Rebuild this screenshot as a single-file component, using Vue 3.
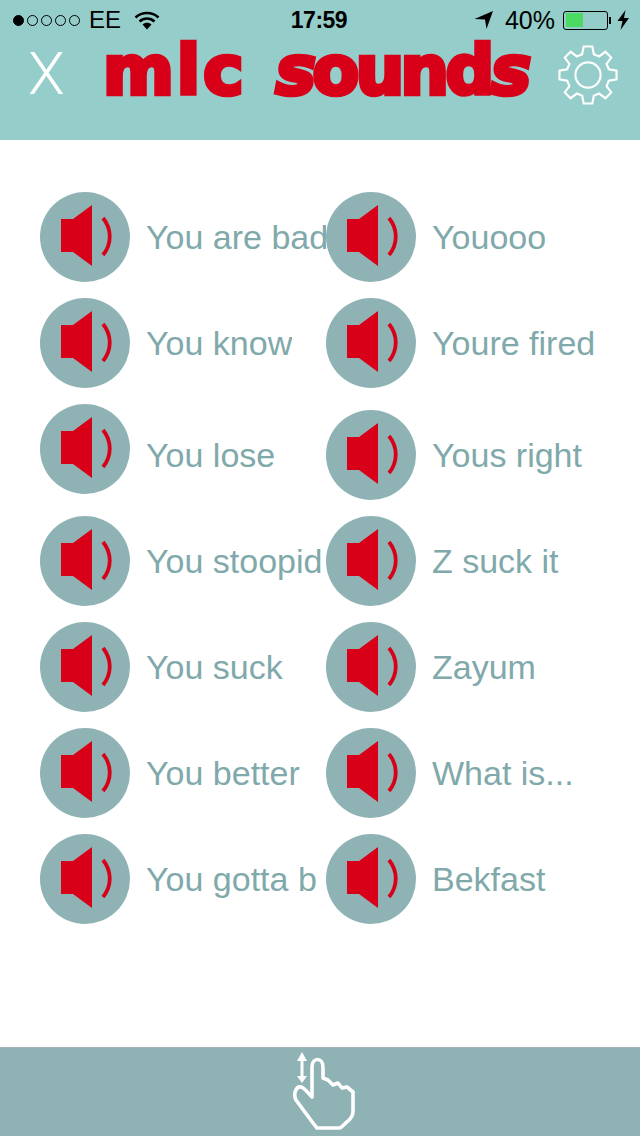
<script setup>
const left = [
  { label: 'You are bad' },
  { label: 'You know' },
  { label: 'You lose', low: true },
  { label: 'You stoopid', wide: true },
  { label: 'You suck' },
  { label: 'You better' },
  { label: 'You gotta b' }
]
const right = [
  { label: 'Youooo' },
  { label: 'Youre fired' },
  { label: 'Yous right', wide: true },
  { label: 'Z suck it' },
  { label: 'Zayum' },
  { label: 'What is...' },
  { label: 'Bekfast' }
]
const columns = [left, right]
</script>

<template>
  <div class="page">
    <header class="header">
      <div class="status">
        <div class="status-left">
          <span class="dots">
            <i class="dot full"></i><i class="dot"></i><i class="dot"></i><i class="dot"></i><i class="dot"></i>
          </span>
          <span class="carrier">EE</span>
          <svg class="wifi" width="26" height="20" viewBox="0 0 26 20">
            <path d="M1.5 7.5 C8 1.5 18 1.5 24.5 7.5" fill="none" stroke="#000" stroke-width="2.6"/>
            <path d="M5.5 11.5 C10 7.5 16 7.5 20.5 11.5" fill="none" stroke="#000" stroke-width="2.6"/>
            <path d="M8.5 14.6 L13 19.5 L17.5 14.6 C15 12.2 11 12.2 8.5 14.6 Z" fill="#000"/>
          </svg>
        </div>
        <div class="time">17:59</div>
        <div class="status-right">
          <svg class="arrow" width="20" height="20" viewBox="0 0 20 20">
            <path d="M0.5 9 L19 1 L12.5 19 L11 9.5 Z" fill="#000"/>
          </svg>
          <span class="pct">40%</span>
          <span class="battery"><span class="charge"></span></span>
          <span class="nub"></span>
          <svg class="bolt" width="13" height="20" viewBox="0 0 13 20">
            <path d="M8.5 0 L0.5 11 L5.5 11 L3.5 20 L12 8 L7 8 Z" fill="#000"/>
          </svg>
        </div>
      </div>
      <div class="nav">
        <span class="close">X</span>
        <span class="logo"><span class="logo-first">mlc</span><span class="logo-second"><em>s</em>ound<em>s</em></span></span>
        <svg class="gear" width="60" height="60" viewBox="-31 -31 62 62">
          <path d="M-4.500 -29.500 H4.500 L6 -21.500 L11.500 -19.200 L18 -24 L24 -18 L19.200 -11.500 L21.500 -6 L29.500 -4.500 V4.500 L21.500 6 L19.200 11.500 L24 18 L18 24 L11.500 19.200 L6 21.500 L4.500 29.500 H-4.500 L-6 21.500 L-11.500 19.200 L-18 24 L-24 18 L-19.200 11.500 L-21.500 6 L-29.500 4.500 V-4.500 L-21.500 -6 L-19.200 -11.500 L-24 -18 L-18 -24 L-11.500 -19.200 L-6 -21.500 Z" fill="none" stroke="#fff" stroke-width="2.200"/>
          <circle r="13" fill="none" stroke="#fff" stroke-width="2.200"/>
        </svg>
      </div>
    </header>

    <main class="board">
      <div v-for="(col, c) in columns" :key="c" class="column">
        <div v-for="item in col" :key="item.label" class="row" :class="{ wide: item.wide, low: item.low }">
          <span class="sound">
            <svg width="90" height="90" viewBox="0 0 90 90">
              <circle cx="45" cy="45" r="45" fill="#8fb3b4"/>
              <path d="M21 27 H33 L52 13 V74 L33 60 H21 Z" fill="#d80018"/>
              <path d="M63 26 C72 37 72 52 63 63" fill="none" stroke="#d80018" stroke-width="3.800"/>
            </svg>
          </span>
          <span class="label">{{ item.label }}</span>
        </div>
      </div>
    </main>

    <footer class="footer">
      <svg class="hand" width="66" height="86" viewBox="0 0 66 86">
        <path d="M5 11 L10 2 L15 11 Z M5 26 H15 L10 33 Z" fill="#fff"/>
        <path d="M10 10 V27" stroke="#fff" stroke-width="3"/>
        <path d="M20 47 V17 C20 7 31 7 31 17 V28 L36 30 L41 35 L46 33 L50 38 L55 37 L61 42 V62 C61 68 55 72 48 78 H25 C20 72 10 58 4 50 C1 44 4 36 9 37 C13 38 16 43 20 47 Z" fill="none" stroke="#fff" stroke-width="3.600" stroke-linejoin="round"/>
      </svg>
    </footer>
  </div>
</template>

<style scoped>
.page {
  width: 640px;
  height: 1136px;
  display: flex;
  flex-direction: column;
  background: #fff;
  overflow: hidden;
  font-family: "Liberation Sans", Arial, sans-serif;
}
.header {
  height: 140px;
  background: #94cdc9;
  flex: none;
}
.status {
  height: 40px;
  display: grid;
  grid-template-columns: 1fr auto 1fr;
  align-items: center;
  padding: 0 10px 0 13px;
  color: #000;
  font-size: 24px;
}
.status-left, .status-right {
  display: flex;
  align-items: center;
}
.status-right { justify-content: flex-end; }
.dots { display: flex; gap: 3px; margin-right: 9px; }
.dot {
  width: 11px;
  height: 11px;
  border: 1.3px solid #000;
  border-radius: 50%;
  box-sizing: border-box;
}
.dot.full { background: #000; }
.carrier { margin-right: 13px; }
.time { font-weight: 700; font-size: 23px; letter-spacing: -.5px; margin-right: 5px; }
.arrow { margin-right: 11px; }
.pct { margin-right: 8px; font-size: 25px; }
.battery {
  width: 45px;
  height: 19px;
  border: 1.3px solid #000;
  border-radius: 3px;
  box-sizing: border-box;
  padding: 1.5px;
  display: flex;
}
.charge { width: 17px; background: #4cd964; }
.nub {
  width: 2px;
  height: 7px;
  background: #000;
  margin: 0 6px 0 1px;
}
.nav {
  height: 70px;
  display: flex;
  align-items: center;
  padding-left: 28px;
}
.close {
  width: 75px;
  flex: none;
  color: #fff;
  font-family: Roboto, "Liberation Sans", sans-serif;
  font-size: 60px;
  font-weight: 300;
  line-height: 1;
  margin-top: -3px;
}
.logo {
  flex: none;
  width: 427px;
  display: flex;
  gap: 29px;
  font-family: "DejaVu Sans", sans-serif;
  font-weight: 700;
  font-size: 68px;
  line-height: 66px;
  margin-top: -8px;
  color: #d80018;
  -webkit-text-stroke: 4.5px #d80018;
  white-space: nowrap;
}
.logo-first { letter-spacing: 3px; }
.logo-second { letter-spacing: -3.5px; }
.logo em { font-style: oblique; }
.gear { margin-left: 28px; margin-top: -1px; flex: none; }
.board {
  flex: 1;
  display: grid;
  grid-template-columns: 286px 1fr;
  padding: 52px 0 0 40px;
  align-items: start;
}
.column {
  display: flex;
  flex-direction: column;
  gap: 16px;
  min-width: 0;
}
.row {
  height: 90px;
  display: flex;
  align-items: center;
  gap: 16px;
}
.row.wide { margin-top: 6px; }
.row.low .label { transform: translateY(6px); }
.sound { width: 90px; height: 90px; flex: none; }
.sound svg { display: block; }
.label {
  font-size: 34px;
  color: #7fa9aa;
  white-space: nowrap;
}
.column:first-child .label {
  max-width: 180px;
  overflow: hidden;
}
.footer {
  height: 89px;
  flex: none;
  background: #8fb3b4;
  border-top: 1px solid #9fb4b4;
  box-sizing: border-box;
  display: flex;
  justify-content: center;
  align-items: flex-end;
}
.hand { display: block; margin-left: 10px; filter: blur(.6px); }
</style>
